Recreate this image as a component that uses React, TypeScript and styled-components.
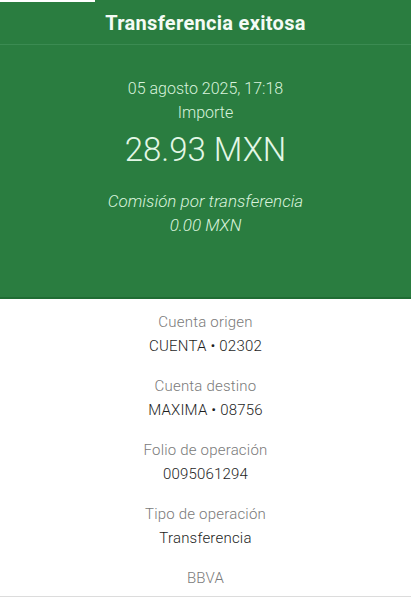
import React from "react";
import styled, { createGlobalStyle } from "styled-components";

const GlobalStyle = createGlobalStyle`
  html, body {
    margin: 0;
    padding: 0;
    background: #ffffff;
  }
  body {
    font-family: Roboto, "Liberation Sans", Arial, sans-serif;
  }
`;

const Screen = styled.div`
  width: 411px;
  height: 597px;
  display: flex;
  flex-direction: column;
  overflow: hidden;
`;

const Header = styled.header`
  background: #2a7d40;
  border-bottom: 2px solid #1f6c33;
  height: 297px;
  display: flex;
  flex-direction: column;
  color: #d9f3dd;
  text-align: center;
`;

const StatusStrip = styled.div`
  width: 95px;
  height: 2px;
  background: #ffffff;
`;

const TitleBar = styled.div`
  height: 42px;
  line-height: 42px;
  border-bottom: 1px solid #3b8b52;
  font-size: 20px;
  font-weight: 700;
  letter-spacing: 0.3px;
  color: #f4fbf5;
`;

const Summary = styled.div`
  padding-top: 32px;
  display: flex;
  flex-direction: column;
`;

const Line = styled.div<{ $italic?: boolean }>`
  font-size: ${(p) => (p.$italic ? "17px" : "16px")};
  line-height: 24px;
  font-weight: 300;
  font-style: ${(p) => (p.$italic ? "italic" : "normal")};
`;

const Amount = styled.div`
  margin-top: 5px;
  margin-bottom: 19px;
  font-size: 33px;
  line-height: 40px;
  font-weight: 300;
  color: #e3f7e6;
`;

const Details = styled.main`
  flex: 1;
  border-bottom: 1px solid #dcdcdc;
  padding-top: 11px;
  display: flex;
  flex-direction: column;
  gap: 16px;
  text-align: center;
`;

const Item = styled.div`
  display: flex;
  flex-direction: column;
`;

const Label = styled.div`
  font-size: 15px;
  line-height: 24px;
  font-weight: 300;
  letter-spacing: 0.2px;
  color: #7a7a7a;
`;

const Value = styled.div`
  font-size: 15px;
  line-height: 24px;
  font-weight: 300;
  letter-spacing: 0.2px;
  color: #1e1e1e;
`;

const details = [
  { label: "Cuenta origen", value: "CUENTA • 02302" },
  { label: "Cuenta destino", value: "MAXIMA • 08756" },
  { label: "Folio de operación", value: "0095061294" },
  { label: "Tipo de operación", value: "Transferencia" },
];

const App: React.FC = () => {
  return (
    <>
      <GlobalStyle />
      <Screen>
        <Header>
          <StatusStrip />
          <TitleBar>Transferencia exitosa</TitleBar>
          <Summary>
            <Line>05 agosto 2025, 17:18</Line>
            <Line>Importe</Line>
            <Amount>28.93 MXN</Amount>
            <Line $italic>Comisión por transferencia</Line>
            <Line $italic>0.00 MXN</Line>
          </Summary>
        </Header>
        <Details>
          {details.map((d) => (
            <Item key={d.label}>
              <Label>{d.label}</Label>
              <Value>{d.value}</Value>
            </Item>
          ))}
          <Item>
            <Label>BBVA</Label>
          </Item>
        </Details>
      </Screen>
    </>
  );
};

export default App;
